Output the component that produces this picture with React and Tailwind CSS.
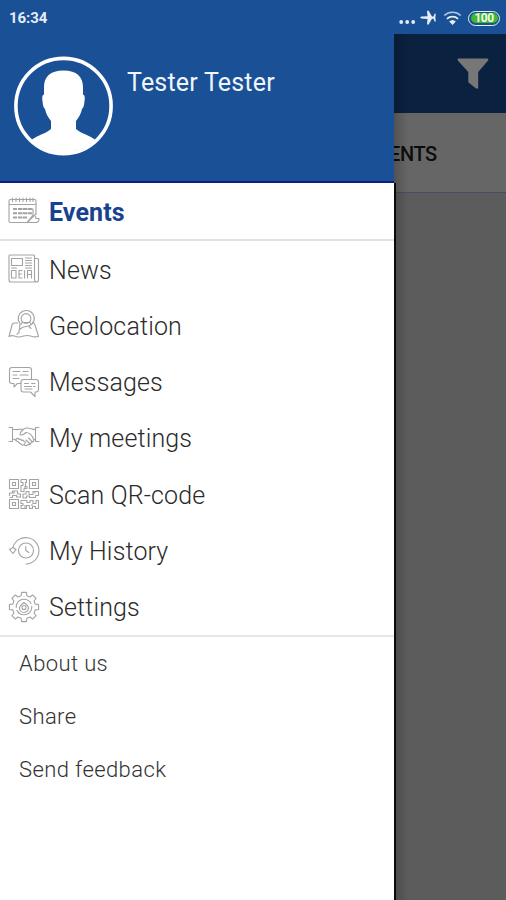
import clsx from 'clsx';

const lineIcon = {
  width: 32,
  height: 32,
  viewBox: '0 0 32 32',
  fill: 'none',
  stroke: 'currentColor',
  strokeWidth: 1.1,
  strokeLinejoin: 'round',
  strokeLinecap: 'round',
};

const menu = [
  { label: 'News', icon: <NewsIcon /> },
  { label: 'Geolocation', icon: <GeoIcon /> },
  { label: 'Messages', icon: <MessagesIcon /> },
  { label: 'My meetings', icon: <MeetingsIcon /> },
  { label: 'Scan QR-code', icon: <QrIcon /> },
  { label: 'My History', icon: <HistoryIcon /> },
  { label: 'Settings', icon: <SettingsIcon /> },
];

const links = ['About us', 'Share', 'Send feedback'];

export default function App() {
  return (
    <div className="flex h-[900px] w-[506px] flex-col overflow-hidden bg-[#5c5c5c] font-[Roboto,sans-serif]">
      <StatusBar />
      <div className="flex min-h-0 flex-1">
        <Drawer />
        <Backdrop />
      </div>
    </div>
  );
}

function StatusBar() {
  return (
    <header className="flex h-[34px] shrink-0 items-center justify-between bg-[#1a5196] pl-[9px] pr-[6px] pt-[2px] text-[#e6edf7]">
      <span className="text-[15px] font-bold tracking-[-0.1px]">16:34</span>
      <div className="flex items-center">
        <svg width="17" height="16" viewBox="0 0 17 16" fill="currentColor">
          <circle cx="2.2" cy="12" r="1.9" />
          <circle cx="8.2" cy="12" r="1.9" />
          <circle cx="14.2" cy="12" r="1.9" />
        </svg>
        <svg className="ml-[4px]" width="17" height="16" viewBox="0 0 17 16" fill="currentColor">
          <path d="M0 7.6 1.5 6.600 7.500 6.300 7 .8h1.600L12 6.400l1.500.1 1-2.700h1.300l-.5 3.800.5 3.800h-1.300l-1-2.700-1.500.1-3.400 5.700H7l.5-5.600-6-.3Z" />
        </svg>
        <svg
          className="ml-[6px]"
          width="19"
          height="16"
          viewBox="0 0 19 16"
          fill="none"
          stroke="currentColor"
          strokeWidth="1.7"
        >
          <path d="M1.300 5.500a12 12 0 0 1 16.400 0" opacity="0.75" />
          <path d="M3.900 8.800a8.200 8.200 0 0 1 11.200 0" />
          <path d="M6.200 11.500a4.900 4.900 0 0 1 6.600 0L9.500 15Z" fill="currentColor" stroke="none" />
        </svg>
        <span className="ml-[6px] flex h-[15px] w-[32px] items-center justify-center rounded-full border-[1.5px] border-[#e6edf7] p-[1.5px]">
          <span className="flex h-full w-full items-center justify-center rounded-full bg-[#43b82c] text-[12px] font-bold leading-none tracking-[-0.6px] text-[#effbe9]">
            100
          </span>
        </span>
      </div>
    </header>
  );
}

function Drawer() {
  return (
    <aside className="flex w-[394px] shrink-0 flex-col bg-white">
      <div className="flex h-[149px] shrink-0 items-start border-b-2 border-[#0f1c86] bg-[#1a5196] pl-[14px] pt-[22px]">
        <Avatar />
        <span className="ml-[14px] mt-[9px] text-[25px] leading-[36px] tracking-[0.2px] text-[#f0f5fc]">Tester Tester</span>
      </div>
      <div className="h-[58px] shrink-0 border-b-2 border-[#e2e2e2]">
        <MenuItem label="Events" icon={<EventsIcon />} active />
      </div>
      <nav className="flex h-[396px] shrink-0 flex-col border-b-2 border-[#e8e8e8]">
        {menu.map((item) => (
          <MenuItem key={item.label} {...item} />
        ))}
      </nav>
      <div className="flex flex-col pl-[19px]">
        {links.map((label) => (
          <a
            key={label}
            className="flex h-[53px] items-center text-[22px] font-light tracking-[0.39px] text-[#333]"
          >
            {label}
          </a>
        ))}
      </div>
    </aside>
  );
}

function MenuItem({ label, icon, active }) {
  return (
    <a className="flex h-full min-h-0 flex-1 items-center pl-[8px] text-[#a3a3a3]">
      {icon}
      <span
        className={clsx(
          'ml-[9px] pt-[2px] text-[25px] leading-none',
          active ? 'font-bold tracking-[0.1px] text-[#17428f]' : 'font-light tracking-[0.14px] text-[#2b2b2b]'
        )}
      >
        {label}
      </span>
    </a>
  );
}

function Backdrop() {
  return (
    <main className="relative flex-1 overflow-hidden bg-[#5c5c5c]">
      <div className="flex h-[79px] items-start justify-end bg-[#0a2140] pr-[17px] pt-[24px]">
        <svg width="32" height="31" viewBox="0 0 32 31" fill="#777">
          <path d="M1 .5h30q1 1-.3 2.400L21.200 14v16.500h-2.200L11.300 24.200V14L1.200 2.900Q0 1.400 1 .5Z" />
        </svg>
      </div>
      <div className="flex h-[80px] items-center border-b border-[#4b4b68] bg-[#666] pt-[2px]">
        <span className="-ml-[5px] text-[20px] font-medium tracking-[-0.4px] text-[#0c0c0c]">ENTS</span>
      </div>
      <div className="absolute inset-y-0 left-0 w-[14px] bg-linear-to-r from-black/20 to-transparent" />
      <div className="absolute bottom-0 left-0 top-[149px] w-[2px] bg-[#0a0a0a]" />
    </main>
  );
}

function Avatar() {
  return (
    <svg width="99" height="100" viewBox="0 0 99 100">
      <circle cx="49.5" cy="50" r="47.6" fill="none" stroke="#fff" strokeWidth="3.6" />
      <path
        fill="#fff"
        d="M49.5 14.500C36 14.500 30 21 30 31v7.500c-2 1-2 3-1.500 6.500 .5 4 .5 6 2.500 8 1 5 3.500 9 6 12v8c-5 4.500-13 6-19.500 11A47.500 47.500 0 0 0 81.500 84c-6.500-5-14.500-6.500-19.500-11v-8c2.500-3 5-7 6-12 2-2 2-4 2.500-8 .5-3.500 .5-5.500-1.500-6.500V31C69 21 63 14.500 49.500 14.500Z"
      />
    </svg>
  );
}

function EventsIcon() {
  return (
    <svg {...lineIcon}>
      <path d="M1 9.500V6q0-1.500 1.500-1.500h24Q28 4.500 28 6v13M1 9.500h27M1 9.500v16.500Q1 27.500 2.500 27.500h17" />
      <path d="M4.500 3v3.500M8 3v3.500M11.500 3v3.500M15 3v3.500M18.500 3v3.500M22 3v3.500M25 3v3.500" />
      <path d="M6 14h2M11 14h2.500M16 14h2.500M21 14h2.500M6 18.200h2M11 18.200h2.500M16 18.200h2.500M21 18.200h2M6 22.500h2M11 22.500h2.500M16 22.500h2" strokeWidth="2" strokeLinecap="square" />
      <path d="M25 14v6l-6 7.500M28 19l-6 5.500-2 3h8q3 0 3-4h-3l-.5-2" />
    </svg>
  );
}

function NewsIcon() {
  return (
    <svg {...lineIcon}>
      <path d="M26.500 5.500h3q1 0 1 1v20.500q0 2-2 2H3q-2 0-2-2V3q0-1 1-1h23.500q1 0 1 1v23q0 3 2 3" />
      <path d="M3.500 5.500h11v7h-11zM3.500 17.500h4.500v7.500h-4.500z" />
      <path d="M17.500 5h6M17.500 7.500h6M17.500 10h6M17.500 12.500h6M3.500 15h5M17.500 15h6M11 17.500h3M11 21h2.500M11 25h3M11 17.500v7.500M16.500 17.500v7.500M19.500 25v-7.500h4v7.500M19.500 21.500h4" />
    </svg>
  );
}

function GeoIcon() {
  return (
    <svg {...lineIcon}>
      <path d="m11.500 20.500.5-6a8 8 0 1 1 6 3q-3 0-6.500 3Z" />
      <circle cx="18" cy="9.500" r="4.900" />
      <path d="M13 15.500q0-2 2-2h6q2 0 2 2" />
      <path d="M9.500 14h-3q-2 0-2.500 2L1 27.500q2.500-1.500 5.500-.5 4 2 9 0 4-1 7 0 4.500 1.500 8 .5L27 16q-.5-2-2.500-2.500M11 21v3M9 25.500l1-1.500M21 17.500l2 2" />
    </svg>
  );
}

function MessagesIcon() {
  return (
    <svg {...lineIcon}>
      <path d="M13 17.500H9.500L6 21v-3.500H4q-2.500 0-2.500-2.500V4q0-2.500 2.500-2.500h17q2.500 0 2.500 2.500v9" />
      <path d="M15.500 13.500h12.500q2.500 0 2.500 2.500v7.500q0 2.500-2.500 2.500h-1v4.500L22.500 26h-7q-2.500 0-2.500-2.500V16q0-2.500 2.500-2.500Z" />
      <path d="M5 5.500h7m3 0h5M5 9h4m3 0h8M5 12.500h6M16.500 17.500h4m3 0h3.500M16.500 20.500h7m2 0h1.500M17 23h7" />
    </svg>
  );
}

function MeetingsIcon() {
  return (
    <svg {...lineIcon}>
      <path d="M1 5.500h3.500v14H1M31 5.500h-3.500v14H31M4.500 7.500c3 0 5 .5 8-.5l3 .5M27.500 7.500c-4 0-5-2-9-1.500-3 .5-6.500 4-6.500 6.500 2 1.500 4 0 6-2 4 0 7 4 7.500 7M4.500 17c1.500 0 2 0 3 1" />
      <path d="M7.500 18q2-3 3.500-.5 2-1 2.500 1 2-1 2.500 1 2 0 1 2-1.500 2.500-3.500 1l-6-4.500ZM16 23q3 1.500 4-.5 3 .5 3-2 2.500 0 3-2.500l1.500-1M18 18l4 4M20.500 16l3.500 3.500" />
    </svg>
  );
}

function QrIcon() {
  return (
    <svg {...lineIcon} strokeLinecap="butt">
      <path d="M1.500 1.500h9v9h-9zM21.500 1.500h9v9h-9zM1.500 21.500h9v9h-9zM4.500 4.500h3v3h-3zM24.500 4.500h3v3h-3zM4.500 24.500h3v3h-3z" />
      <path d="M13 10.500v-3h2v-3h-2v-3h5.500v3h-1v4h1.500v2h-3v3h-3ZM1.500 18v-3h3v-2h5v3h3v3h-4v-1.500h-4v2h-3M15 20v-4h3v-2.500h3v3h4v-3h5.500v4h-3v2h-6v-1.500h-3v2ZM13 30.500v-3h2v-2h-2v-3h6v2h3v-2h3v3h3v-3h2.500v8h-3v-2h-3v2h-3v-3h-3v3Z" />
      <path d="M17 8v3M27 13.500v2M24 26v2M17 27v3M6 13v3" />
    </svg>
  );
}

function HistoryIcon() {
  return (
    <svg {...lineIcon}>
      <path d="M5 12.300a13.200 13.200 0 1 1 13 16.700M1.500 14.500 5 12.500l3 2-3 4Z" />
      <circle cx="18" cy="15.500" r="7.500" />
      <path d="M17.800 11.500v4l3 2" />
    </svg>
  );
}

// eight teeth, each a wide foot that narrows toward a flat top
const gearPoints = Array.from({ length: 8 }, (_, i) =>
  [
    [-14, 11.7],
    [-9.5, 14.8],
    [9.5, 14.8],
    [14, 11.7],
  ].map(([offset, radius]) => {
    const angle = ((i * 45 + offset) * Math.PI) / 180;
    return `${(16 + radius * Math.sin(angle)).toFixed(2)},${(16 - radius * Math.cos(angle)).toFixed(2)}`;
  })
)
  .flat()
  .join(' ');

function SettingsIcon() {
  return (
    <svg {...lineIcon}>
      <polygon points={gearPoints} />
      <circle cx="16" cy="16" r="7.8" strokeDasharray="21 3" />
      <path d="M16 11.500q4.500 3.500 4.500 5.500a4.500 4.500 0 0 1-9 0q0-2 4.500-5.500Z" />
      <circle cx="16" cy="16.500" r="2" />
    </svg>
  );
}
